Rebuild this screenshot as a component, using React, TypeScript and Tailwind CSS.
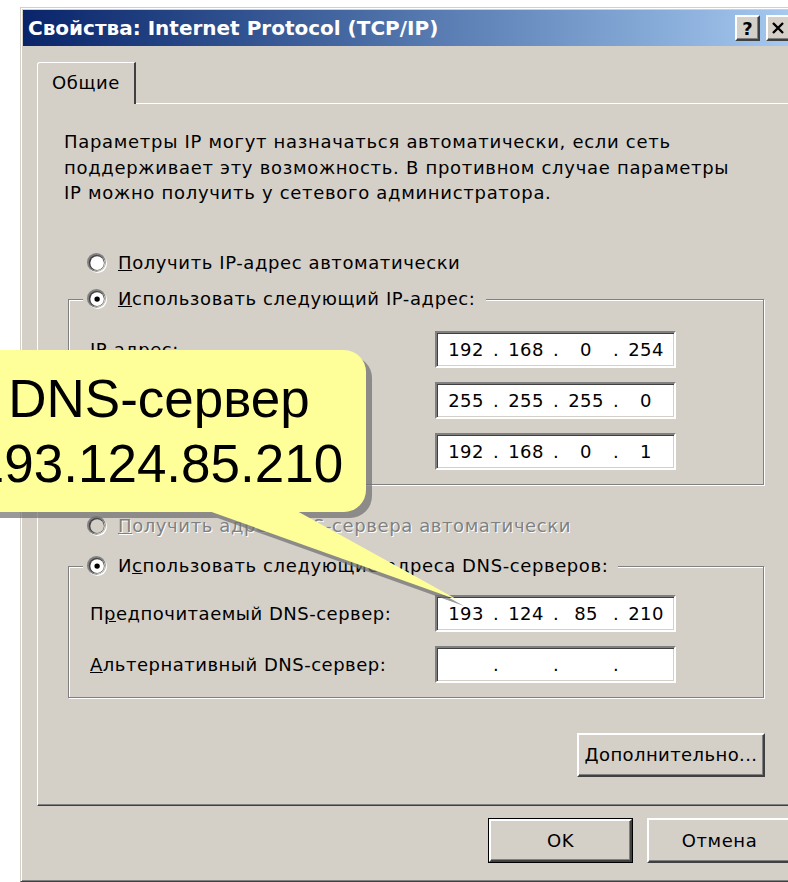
import { Fragment, type ReactNode } from "react";

const sysFont = "font-['DejaVu_Sans',sans-serif] text-[18px] tracking-[0.6px] text-black";

// classic 3D radio: dark top-left rim, light bottom-right rim
function Radio({ checked = false, disabled = false }: { checked?: boolean; disabled?: boolean }) {
  return (
    <svg width="20" height="20" viewBox="0 0 17 17" className="shrink-0">
      <circle cx="9" cy="9" r="8" fill="#fff" />
      <circle cx="8" cy="8" r="8" fill="#808080" />
      <circle cx="9" cy="9" r="6.6" fill="#d4d0c8" />
      <circle cx="8.2" cy="8.2" r="6.6" fill="#404040" />
      <circle cx="8.6" cy="8.6" r="5.8" fill={disabled ? "#d4d0c8" : "#fff"} />
      {checked ? <circle cx="8.6" cy="8.6" r="2.3" fill="#000" /> : null}
    </svg>
  );
}

function IpField({ parts = ["", "", "", ""] }: { parts?: string[] }) {
  return (
    <div className="flex h-[37px] w-[241px] items-center border-2 border-t-[#808080] border-l-[#808080] border-r-white border-b-white bg-white pl-[3px] tracking-[0.4px] shadow-[inset_1px_1px_0_#404040,inset_-1px_-1px_0_#d4d0c8]">
      {parts.map((p, i) => (
        <Fragment key={i}>
          {i > 0 ? <span className="w-[8px] text-center">.</span> : null}
          <span className="w-[52px] text-center">{p}</span>
        </Fragment>
      ))}
    </div>
  );
}

function Raised({ children, className = "" }: { children?: ReactNode; className?: string }) {
  return (
    <div
      className={`flex items-center justify-center border-2 border-t-white border-l-white border-r-[#404040] border-b-[#404040] bg-[#d4d0c8] shadow-[inset_-1px_-1px_0_#808080] ${className}`}
    >
      {children}
    </div>
  );
}

function Group({ legend, children, className = "" }: { legend: ReactNode; children: ReactNode; className?: string }) {
  return (
    <div
      className={`ml-[30px] flex w-[696px] flex-col border border-[#808080] pb-[14px] shadow-[inset_1px_1px_0_#fff,1px_1px_0_#fff] ${className}`}
    >
      <div className="-mt-[14px] ml-[14px] flex h-[26px] items-center gap-[11px] self-start bg-[#d4d0c8] pl-[4px] pr-[10px]">
        <Radio checked />
        <span>{legend}</span>
      </div>
      {children}
    </div>
  );
}

function FieldRow({ label, parts }: { label: ReactNode; parts?: string[] }) {
  return (
    <div className="flex items-center pl-[21px]">
      <span className="w-[345px] tracking-[0.5px]">{label}</span>
      <IpField parts={parts} />
    </div>
  );
}

function Callout() {
  return (
    <div className="pointer-events-none absolute inset-0">
      <svg width="788" height="882" className="absolute left-0 top-0">
        <g fill="#6f6f6f" opacity="0.7">
          <rect x="-42" y="356" width="414" height="162" rx="22" />
          <polygon points="184,506 464,606 283,506" />
        </g>
        <g fill="#ffff99">
          <rect x="-48" y="350" width="414" height="162" rx="22" />
          <polygon points="178,500 458,600 277,500" />
        </g>
      </svg>
      <div className="absolute left-[-48px] top-[350px] flex h-[162px] w-[414px] flex-col items-center justify-center font-['Liberation_Sans',Arial,sans-serif] text-[53px] leading-[65px] tracking-normal text-black">
        <span>DNS-сервер</span>
        <span>193.124.85.210</span>
      </div>
    </div>
  );
}

export default function App() {
  return (
    <div className={`relative h-[882px] w-[788px] overflow-hidden bg-white ${sysFont}`}>
      <div className="ml-[20px] mt-[7px] flex h-[875px] w-[777px] flex-col border border-t-[#d4d0c8] border-l-[#d4d0c8] border-r-[#404040] border-b-[#404040] bg-[#d4d0c8] p-[2px] shadow-[inset_1px_1px_0_#fff,inset_-1px_-1px_0_#808080]">
        {/* caption */}
        <div className="flex h-[36px] shrink-0 items-center bg-linear-to-r from-[#0a246a] to-[#a6caf0] pl-[5px]">
          <span className="text-[20px] font-bold tracking-normal text-white">Свойства: Internet Protocol (TCP/IP)</span>
          <div className="ml-auto flex items-center gap-[6px] pr-[3px]">
            <Raised className="h-[26px] w-[25px] text-[18px] font-bold tracking-normal">?</Raised>
            <Raised className="h-[26px] w-[25px]">
              <svg width="13" height="12" viewBox="0 0 13 12">
                <path d="M1 1l10 10M11 1L1 11" stroke="#000" strokeWidth="2.4" />
              </svg>
            </Raised>
          </div>
        </div>

        <div className="flex flex-col pl-[14px] pr-[2px]">
          {/* tab strip */}
          <div className="relative z-10 -mb-px mt-[16px] flex h-[42px] w-[99px] rounded-tl-[3px] border-t border-l border-r-2 border-t-white border-l-white border-r-[#404040] bg-[#d4d0c8] pl-[14px] pt-[7px] leading-[26px]">
            Общие
          </div>

          <div className="flex h-[703px] flex-col border border-t-white border-l-white border-r-[#404040] border-b-[#404040] shadow-[inset_-1px_-1px_0_#808080]">
            <p className="ml-[26px] mt-[25px] leading-[25.5px] tracking-[0.7px]">
              Параметры IP могут назначаться автоматически, если сеть
              <br />
              поддерживает эту возможность. В противном случае параметры
              <br />
              IP можно получить у сетевого администратора.
            </p>

            <div className="ml-[49px] mt-[44px] flex h-[26px] items-center gap-[11px]">
              <Radio />
              <span>
                <span className="underline">П</span>олучить IP-адрес автоматически
              </span>
            </div>

            <Group
              className="mt-[23px]"
              legend={
                <>
                  <span className="underline">И</span>спользовать следующий IP-адрес:
                </>
              }
            >
              <div className="mt-[19px] flex flex-col gap-[14px]">
                <FieldRow label="IP-адрес:" parts={["192", "168", "0", "254"]} />
                <FieldRow label="Маска подсети:" parts={["255", "255", "255", "0"]} />
                <FieldRow label="Основной шлюз:" parts={["192", "168", "0", "1"]} />
              </div>
            </Group>

            <div className="ml-[49px] mt-[28px] flex h-[26px] items-center gap-[11px]">
              <Radio disabled />
              <span className="text-[#808080] [text-shadow:1px_1px_0_#fff]">
                <span className="underline">П</span>олучить адрес DNS-сервера автоматически
              </span>
            </div>

            <Group
              className="mt-[27px]"
              legend={
                <>
                  И<span className="underline">с</span>пользовать следующие адреса DNS-серверов:
                </>
              }
            >
              <div className="mt-[16px] flex flex-col gap-[14px]">
                <FieldRow
                  label={
                    <>
                      П<span className="underline">р</span>едпочитаемый DNS-сервер:
                    </>
                  }
                  parts={["193", "124", "85", "210"]}
                />
                <FieldRow
                  label={
                    <>
                      <span className="underline">А</span>льтернативный DNS-сервер:
                    </>
                  }
                />
              </div>
            </Group>

            <div className="ml-[539px] mt-[35px]">
              <Raised className="h-[44px] w-[188px] tracking-[0.4px]">
                <span>
                  <span className="underline">Д</span>ополнительно...
                </span>
              </Raised>
            </div>
          </div>
        </div>

        {/* dialog buttons */}
        <div className="mt-[12px] flex gap-[14px] pl-[465px]">
          <div className="border border-black">
            <Raised className="h-[43px] w-[143px]">OK</Raised>
          </div>
          <Raised className="h-[45px] w-[145px]">Отмена</Raised>
        </div>
      </div>

      <Callout />
    </div>
  );
}
